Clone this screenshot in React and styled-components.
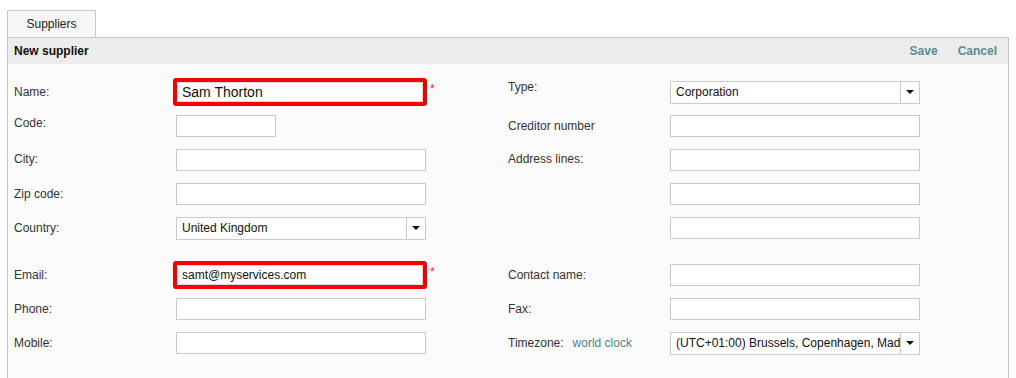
import React from 'react';
import styled, { createGlobalStyle } from 'styled-components';

const GlobalStyle = createGlobalStyle`
    body {
        margin: 0;
        background: #ffffff;
        font-family: "Liberation Sans", Arial, sans-serif;
        font-size: 12px;
        color: #333333;
    }
`

const Page = styled.div`
    padding: 10px 7px 0 7px;
    height: 378px;
    box-sizing: border-box;
    overflow: hidden;
`

const Tabs = styled.div`
    display: flex;
`

const Tab = styled.div`
    width: 87px;
    height: 26px;
    border: 1px solid #c8c8c8;
    border-bottom: none;
    background: #f7f7f7;
    color: #222222;
    display: flex;
    align-items: center;
    justify-content: center;
    font-size: 12px;
`

const Panel = styled.div`
    border: 1px solid #c8c8c8;
    border-bottom: none;
    background: #fbfbfb;
    height: 400px;
`

const Header = styled.div`
    height: 26px;
    background: #ececec;
    display: flex;
    align-items: center;
    justify-content: space-between;
    padding: 0 11px 0 6px;
`

const Title = styled.div`
    font-weight: bold;
    color: #111111;
    font-size: 12px;
`

const Actions = styled.div`
    display: flex;
    gap: 20px;
`

const Action = styled.a`
    font-weight: bold;
    color: #5d8b8b;
    font-size: 12px;
    text-decoration: none;
`

const Form = styled.div`
    display: grid;
    grid-template-columns: 162px 332px 162px 1fr;
    grid-template-rows: repeat(5, 34px) 13px repeat(3, 34px);
    padding: 11px 0 0 6px;
    align-items: center;
`

const Spacer = styled.div`
    grid-column: 1 / -1;
`

const Label = styled.div`
    color: #333333;
    font-size: 12px;
    display: flex;
    gap: 9px;
    margin-top: ${(p) => -(p.$raise || 0)}px;
`

const Link = styled.a`
    color: #4f8585;
    text-decoration: none;
`

const Field = styled.div`
    display: flex;
    align-items: center;
`

const Input = styled.div`
    box-sizing: border-box;
    width: ${(p) => p.$w || 250}px;
    height: 22px;
    border: 1px solid #cbcbcb;
    background: #ffffff;
    font-size: 12px;
    color: #111111;
    padding-left: 5px;
    display: flex;
    align-items: center;
`

const Highlight = styled.div`
    box-sizing: border-box;
    width: 254px;
    height: 28px;
    margin-left: -3px;
    border: 4px solid #f40000;
    border-radius: 3px;
    background: #ffffff;
    box-shadow: inset 0 0 0 1px #d8d8d8;
    font-size: ${(p) => p.$big ? '14px' : '12px'};
    color: #111111;
    padding-left: 5px;
    display: flex;
    align-items: center;
`

const Required = styled.span`
    color: #ff2020;
    font-size: 12px;
    margin-left: 3px;
    align-self: flex-start;
    margin-top: 4px;
`

const Select = styled.div`
    box-sizing: border-box;
    width: 250px;
    height: 23px;
    border: 1px solid #cbcbcb;
    background: #ffffff;
    display: flex;
    font-size: 12px;
    color: #111111;
`

const SelectValue = styled.div`
    flex: 1;
    padding-left: 5px;
    display: flex;
    align-items: center;
    overflow: hidden;
    white-space: nowrap;
`

const SelectArrow = styled.div`
    width: 18px;
    border-left: 1px solid #cbcbcb;
    display: flex;
    align-items: center;
    justify-content: center;
    &::after {
        content: '';
        border-left: 4px solid transparent;
        border-right: 4px solid transparent;
        border-top: 4px solid #111111;
    }
`

function Dropdown({ value }) {
    return (
        <Select>
            <SelectValue>{value}</SelectValue>
            <SelectArrow />
        </Select>
    )
}

export default function App() {
    return (
        <Page>
            <GlobalStyle />
            <Tabs>
                <Tab>Suppliers</Tab>
            </Tabs>
            <Panel>
                <Header>
                    <Title>New supplier</Title>
                    <Actions>
                        <Action>Save</Action>
                        <Action>Cancel</Action>
                    </Actions>
                </Header>
                <Form>
                    <Label>Name:</Label>
                    <Field>
                        <Highlight $big>Sam Thorton</Highlight>
                        <Required>*</Required>
                    </Field>
                    <Label $raise={11}>Type:</Label>
                    <Field><Dropdown value="Corporation" /></Field>

                    <Label $raise={7}>Code:</Label>
                    <Field><Input $w={100} /></Field>
                    <Label>Creditor number</Label>
                    <Field><Input /></Field>

                    <Label $raise={2}>City:</Label>
                    <Field><Input /></Field>
                    <Label $raise={2}>Address lines:</Label>
                    <Field><Input /></Field>

                    <Label>Zip code:</Label>
                    <Field><Input /></Field>
                    <Label />
                    <Field><Input /></Field>

                    <Label>Country:</Label>
                    <Field><Dropdown value="United Kingdom" /></Field>
                    <Label />
                    <Field><Input /></Field>

                    <Spacer />

                    <Label>Email:</Label>
                    <Field>
                        <Highlight>samt@myservices.com</Highlight>
                        <Required>*</Required>
                    </Field>
                    <Label>Contact name:</Label>
                    <Field><Input /></Field>

                    <Label>Phone:</Label>
                    <Field><Input /></Field>
                    <Label>Fax:</Label>
                    <Field><Input /></Field>

                    <Label>Mobile:</Label>
                    <Field><Input /></Field>
                    <Label>Timezone: <Link>world clock</Link></Label>
                    <Field><Dropdown value="(UTC+01:00) Brussels, Copenhagen, Madrid, Paris" /></Field>
                </Form>
            </Panel>
        </Page>
    )
}
